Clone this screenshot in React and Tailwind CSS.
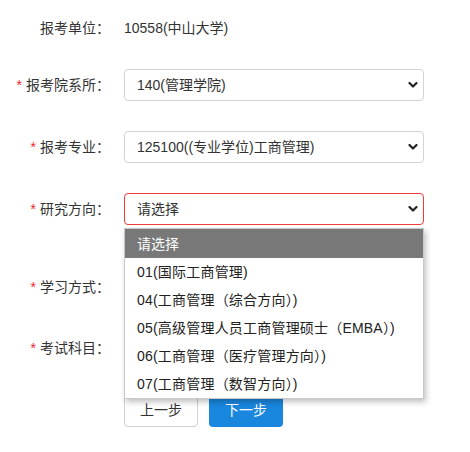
import React from 'react';

const options = [
  '01(国际工商管理)',
  '04(工商管理（综合方向）)',
  '05(高级管理人员工商管理硕士（EMBA）)',
  '06(工商管理（医疗管理方向）)',
  '07(工商管理（数智方向）)',
];

function Chevron() {
  return (
    <svg width="10" height="7" viewBox="0 0 10 7" className="absolute right-[5px] top-1/2 -translate-y-1/2">
      <path d="M1.5 1.5l3.5 3.5 3.5-3.5" fill="none" stroke="#222" strokeWidth="2.2" strokeLinecap="round" strokeLinejoin="round" />
    </svg>
  );
}

function Label({ text, required }) {
  return (
    <div className="w-[112px] shrink-0 text-right pr-[2px] whitespace-nowrap">
      {required && <span className="text-[#f5222d] mr-[4px]">*</span>}
      {text}：
    </div>
  );
}

function FakeSelect({ value, error, children }) {
  return (
    <div className={`relative w-[300px] h-[32px] ml-[12px] rounded-[4px] border bg-white flex items-center pl-[12px] ${error ? 'border-[#f03a3a]' : 'border-[#d4d4d4]'}`}>
      <span>{value}</span>
      <Chevron />
      {children}
    </div>
  );
}

export default function App() {
  return (
    <div className="min-h-screen bg-white text-[14px] leading-[20px] text-[#333] font-['Liberation_Sans','Noto_Sans_CJK_SC',sans-serif]">
      <div className="pt-[12px]">
        {/* 报考单位 */}
        <div className="flex items-center h-[32px] mb-[25px]">
          <Label text="报考单位" />
          <div className="ml-[12px]">10558(中山大学)</div>
        </div>

        <div className="flex items-center h-[32px] mb-[30px]">
          <Label text="报考院系所" required />
          <FakeSelect value="140(管理学院)" />
        </div>

        <div className="flex items-center h-[32px] mb-[30px]">
          <Label text="报考专业" required />
          <FakeSelect value="125100((专业学位)工商管理)" />
        </div>

        {/* 研究方向 + 下拉列表 */}
        <div className="flex items-center h-[32px] mb-[46px] relative z-10">
          <Label text="研究方向" required />
          <FakeSelect value="请选择" error>
            <div className="absolute left-[-1px] top-[34px] w-[300px] bg-white border border-[#c8c8c8] shadow-[2px_3px_6px_rgba(0,0,0,0.25)]">
              <div className="h-[29px] bg-[#787878] text-white flex items-center pl-[12px]">请选择</div>
              {options.map(o => (
                <div key={o} className="h-[28px] flex items-center pl-[12px] text-[#222] whitespace-nowrap tracking-[0.2px]">{o}</div>
              ))}
            </div>
          </FakeSelect>
        </div>

        {/* 下面两个下拉框被列表遮住 */}
        <div className="flex items-center h-[32px] mb-[29px]">
          <Label text="学习方式" required />
          <FakeSelect value="" />
        </div>

        <div className="flex items-center h-[32px] mb-[29px]">
          <Label text="考试科目" required />
          <FakeSelect value="" />
        </div>

        <div className="flex pl-[124px] gap-[11px]">
          <button className="w-[74px] h-[34px] rounded-[4px] border border-[#d0d0d0] bg-white text-[#333]">上一步</button>
          <button className="w-[74px] h-[34px] rounded-[4px] bg-[#1a87df] text-white">下一步</button>
        </div>
      </div>
    </div>
  );
}
